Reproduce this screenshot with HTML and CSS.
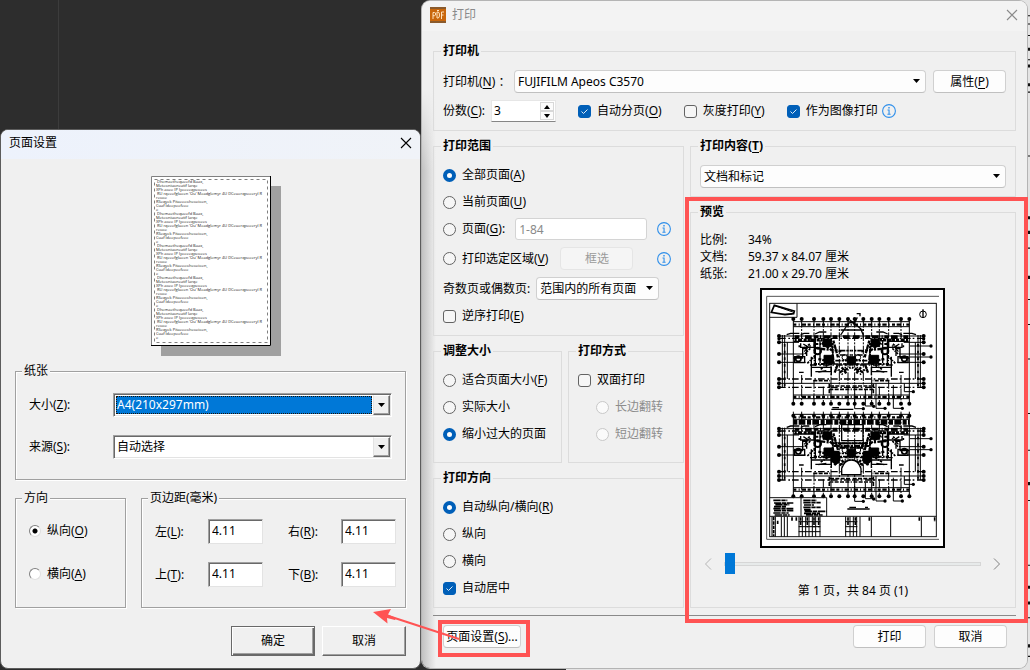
FILE: index.html
```html
<!DOCTYPE html>
<html lang="zh-CN">
<head>
<meta charset="utf-8">
<title>打印</title>
<link rel="stylesheet" href="styles.css">
</head>
<body>
<svg class="defs" aria-hidden="true">
  <defs>
    <symbol id="info" viewBox="0 0 14 14">
      <circle cx="7" cy="7" r="6.4" fill="none" stroke="#2f8fea" stroke-width="1.1"/>
      <path d="M6.3 3h1.4v1.4H6.3zM5.5 5.6h2.1v4.2h1v.9H5.4v-.9h1.1V6.5h-1z" fill="#2f8fea"/>
    </symbol>
    <symbol id="cross" viewBox="0 0 12 12">
      <path d="M1 1l10 10M11 1L1 11" fill="none" stroke="currentColor" stroke-width="1.1"/>
    </symbol>
    <symbol id="down" viewBox="0 0 7 4"><path d="M0 0h7L3.5 4z" fill="currentColor"/></symbol>
  </defs>
</svg>
<main class="desktop">
  <svg class="desktop-art" viewBox="0 0 3 640" preserveAspectRatio="none" aria-hidden="true">
    <path d="M0 15h3M0 23h3M0 34h3M0 57h3M0 88h3M0 149h3M0 237h3M0 286h3M0 310h3M0 343h3M0 395h3M0 430h3M0 478h3M0 540h3M0 590h3M0 627h3" stroke="#111"/>
    <path d="M0 47h3M0 63h3M0 81h3M0 208h3M0 222h3M0 265h3M0 462h3M0 561h3M0 576h3M0 617h3" stroke="#111" stroke-width="3"/>
  </svg>

  <section class="window setup" aria-label="页面设置">
    <header class="titlebar setup-title">
      <h1>页面设置</h1>
      <button class="close" aria-label="关闭"><svg width="12" height="12"><use href="#cross"/></svg></button>
    </header>
    <div class="setup-body">
      <svg class="paper" width="120" height="170" viewBox="0 0 120 170" aria-hidden="true">
        <defs>
          <g id="para">
            <text x="6" y="2">Dhemaethequeefd Baax,</text>
            <text x="5" y="6">Meteoniuoneatif larqe</text>
            <text x="5" y="10">XPh aoee IP lyeeeeqpeoees</text>
            <text x="6" y="14">RU rqeeefglueen 'Ou' Meadglemyr 4U DCeuerqpeeeryl R</text>
            <text x="5" y="18">reooe</text>
            <text x="5" y="22">RSeqyek Pitaeeeoheoeioen,</text>
            <text x="5" y="26">Cuaf ldeepeefeee</text>
            <text x="5" y="30">e</text>
          </g>
        </defs>
        <rect width="120" height="170" fill="#fff"/>
        <path d="M.5 170V.5H120" fill="none" stroke="#808080"/>
        <path d="M119.5 0v169.5H0" fill="none" stroke="#000"/>
        <rect x="3.5" y="3.5" width="113" height="163" fill="none" stroke="#808080" stroke-dasharray="3 3"/>
        <use href="#para" y="5"/><use href="#para" y="37"/><use href="#para" y="69"/><use href="#para" y="101"/><use href="#para" y="133"/>
      </svg>

      <fieldset class="old-group">
        <legend>纸张</legend>
        <div class="paper-fields">
          <label for="size">大小(<u>Z</u>):</label>
          <div class="old-select focused">
            <select id="size"><option>A4(210x297mm)</option></select>
            <span class="old-drop"><svg width="7" height="4"><use href="#down"/></svg></span>
          </div>
          <label for="source">来源(<u>S</u>):</label>
          <div class="old-select">
            <select id="source"><option>自动选择</option></select>
            <span class="old-drop"><svg width="7" height="4"><use href="#down"/></svg></span>
          </div>
        </div>
      </fieldset>

      <div class="setup-row">
        <fieldset class="old-group">
          <legend>方向</legend>
          <div class="old-radios">
            <label><input type="radio" name="orient" checked><span>纵向(<u>O</u>)</span></label>
            <label><input type="radio" name="orient"><span>横向(<u>A</u>)</span></label>
          </div>
        </fieldset>
        <fieldset class="old-group">
          <legend>页边距(毫米)</legend>
          <div class="margins">
            <label for="ml">左(<u>L</u>):</label><input id="ml" type="text" value="4.11">
            <label for="mr">右(<u>R</u>):</label><input id="mr" type="text" value="4.11">
            <label for="mt">上(<u>T</u>):</label><input id="mt" type="text" value="4.11">
            <label for="mb">下(<u>B</u>):</label><input id="mb" type="text" value="4.11">
          </div>
        </fieldset>
      </div>

      <div class="setup-actions">
        <button class="old-button default">确定</button>
        <button class="old-button">取消</button>
      </div>
    </div>
  </section>

  <section class="window print" aria-label="打印">
    <header class="titlebar print-title">
      <svg width="16" height="16" viewBox="0 0 16 16" aria-hidden="true">
        <rect width="16" height="16" rx="2" fill="#c9670c"/>
        <path d="M0 1h16M0 15h16" stroke="#8a5a2c" stroke-width="2"/>
        <path d="M3 12V5.500h1.500q1.200 0 1.200 1.500T4.500 8.700H3M7 5v6h1q1.500 0 1.500-3T8 5zM11.500 12V5H14M11.500 8H13.500M7 4l1-1 1 1" fill="none" stroke="#ffe3bd" stroke-width="1"/>
      </svg>
      <h1>打印</h1>
      <button class="close" aria-label="关闭"><svg width="12" height="12"><use href="#cross"/></svg></button>
    </header>

    <div class="print-body">
      <fieldset class="group">
        <legend>打印机</legend>
        <div class="line printer-line">
          <label for="printer">打印机(<u>N</u>) ：</label>
          <div class="select grow">
            <select id="printer"><option>FUJIFILM Apeos C3570</option></select>
            <svg width="7" height="4"><use href="#down"/></svg>
          </div>
          <button class="button">属性(<u>P</u>)</button>
        </div>
        <div class="line options-line">
          <div class="copies">
            <label for="copies">份数(<u>C</u>):</label>
            <div class="spin">
              <input id="copies" type="number" value="3">
              <div class="spin-buttons">
                <button aria-label="增加"><svg width="6" height="4" viewBox="0 0 6 4"><path d="M0 4h6L3 0z"/></svg></button>
                <button aria-label="减少"><svg width="6" height="4" viewBox="0 0 6 4"><path d="M0 0h6L3 4z"/></svg></button>
              </div>
            </div>
          </div>
          <label class="choice"><input type="checkbox" checked>自动分页(<u>O</u>)</label>
          <label class="choice"><input type="checkbox">灰度打印(<u>Y</u>)</label>
          <label class="choice"><input type="checkbox" checked>作为图像打印<svg width="14" height="14"><use href="#info"/></svg></label>
        </div>
      </fieldset>

      <div class="columns">
        <div class="stack">
          <fieldset class="group range">
            <legend>打印范围</legend>
            <div class="choices">
              <label class="choice"><input type="radio" name="range" checked>全部页面(<u>A</u>)</label>
              <label class="choice"><input type="radio" name="range">当前页面(<u>U</u>)</label>
              <div class="line">
                <label class="choice"><input type="radio" name="range">页面(<u>G</u>):</label>
                <input class="pages" type="text" placeholder="1-84" aria-label="页面">
                <svg class="end" width="14" height="14"><use href="#info"/></svg>
              </div>
              <div class="line spaced">
                <label class="choice"><input type="radio" name="range">打印选定区域(<u>V</u>)</label>
                <button class="button pick" disabled>框选</button>
                <svg class="end" width="14" height="14"><use href="#info"/></svg>
              </div>
              <div class="line parity spaced">
                <label for="parity">奇数页或偶数页:</label>
                <div class="select">
                  <select id="parity"><option>范围内的所有页面</option></select>
                  <svg width="7" height="4"><use href="#down"/></svg>
                </div>
              </div>
              <label class="choice"><input type="checkbox">逆序打印(<u>E</u>)</label>
            </div>
          </fieldset>

          <div class="pair">
            <fieldset class="group">
              <legend>调整大小</legend>
              <div class="choices">
                <label class="choice"><input type="radio" name="fit">适合页面大小(<u>F</u>)</label>
                <label class="choice"><input type="radio" name="fit">实际大小</label>
                <label class="choice"><input type="radio" name="fit" checked>缩小过大的页面</label>
              </div>
            </fieldset>
            <fieldset class="group">
              <legend>打印方式</legend>
              <div class="choices">
                <label class="choice"><input type="checkbox">双面打印</label>
                <label class="choice sub"><input type="radio" name="flip" disabled>长边翻转</label>
                <label class="choice sub"><input type="radio" name="flip" disabled>短边翻转</label>
              </div>
            </fieldset>
          </div>

          <fieldset class="group">
            <legend>打印方向</legend>
            <div class="choices">
              <label class="choice"><input type="radio" name="dir" checked>自动纵向/横向(<u>R</u>)</label>
              <label class="choice"><input type="radio" name="dir">纵向</label>
              <label class="choice"><input type="radio" name="dir">横向</label>
              <label class="choice"><input type="checkbox" checked>自动居中</label>
            </div>
          </fieldset>
        </div>

        <div class="stack">
          <fieldset class="group">
            <legend>打印内容(<u>T</u>)</legend>
            <div class="line content-line">
              <div class="select grow">
                <select aria-label="打印内容"><option>文档和标记</option></select>
                <svg width="7" height="4"><use href="#down"/></svg>
              </div>
            </div>
          </fieldset>

          <div class="preview-wrap">
            <fieldset class="group preview">
              <legend>预览</legend>
              <dl class="facts">
                <dt>比例:</dt><dd>34%</dd>
                <dt>文档:</dt><dd>59.37 x 84.07 厘米</dd>
                <dt>纸张:</dt><dd>21.00 x 29.70 厘米</dd>
              </dl>
              <svg class="plan" width="185" height="260" viewBox="30 24 555 780" role="img" aria-label="图纸预览">
                <defs>
                  <g id="pins"><circle cx="130" r="6"/><circle cx="155" r="6"/><circle cx="192" r="6"/><circle cx="220" r="6"/><circle cx="243" r="6"/><circle cx="268" r="6"/><circle cx="294" r="6"/></g>
                  <g id="side"><circle cy="168" r="6"/><circle cy="176" r="5"/><circle cy="187" r="6"/><circle cy="222" r="6"/><circle cy="247" r="6"/><circle cy="297" r="6"/><circle cy="310" r="6"/><circle cy="322" r="6"/></g>
                  <g id="half" fill="none" stroke="#000" stroke-width="3">
                    <path d="M87 168h217M87 187h60M87 222h74M87 247h80M87 310h217"/>
                    <path d="M87 175h217M87 297h217M87 322h217M180 255h124" stroke-dasharray="20 8 5 6" stroke-width="4"/>
                    <path d="M97 165v157M104 165v157M112 187v110M130 117v254"/>
                    <path d="M155 117v54M192 117v50M220 117v58M243 117v53M268 117v200M294 117v250M243 250v121M220 320v50M192 300v70M155 285v86" stroke-dasharray="26 4 6 4"/>
                    <path d="M130 345h174M130 356h174M130 125h174M130 140h174"/>
                    <path d="M130 351h174M130 134h174" stroke-width="7" stroke-dasharray="9 7 3 6 13 5"/>
                    <path d="M134 170h165" stroke-width="9" stroke-dasharray="14 5 3 9 20 6"/>
                    <path d="M134 180h112" stroke-width="9" stroke-dasharray="6 4 12 5 9 3"/>
                    <path d="M132 184h60v18h-40v-12M130 234h28v-28h12v22M134 230v18h30v-18zM196 170v88M210 180v70M184 230v60M184 262h60v24M196 275h50" stroke-width="4"/>
                    <circle cx="145" cy="236" r="8" stroke-width="5"/><circle cx="203" cy="213" r="10" stroke-width="6"/><circle cx="284" cy="232" r="8" stroke-width="3"/>
                    <path d="M219 178h26v22h-26zM222 226h28v25h-28zM292 230h12v23h-12z" fill="#000"/>
                    <path d="M200 205l36 4M216 188l30 24M205 237l40 9M250 182l14 50M262 256l-8 22M275 262l14 18M270 276l32-14M254 210l20 4" stroke-width="7" stroke-dasharray="9 3 14 4"/>
                    <path d="M194 192h54v60h-54z" stroke-width="6" stroke-dasharray="11 4 5 3"/>
                    <path d="M250 252h54M246 196l6 54M270 212h34M270 225h34M256 242h48" stroke-width="5" stroke-dasharray="16 3 7 3"/>
                    <path d="M160 206l22-16M164 222l18-18M172 250l22-22M212 268l30-18M256 262l22 22M286 250v30" stroke-width="5" stroke-dasharray="7 3 4 3"/>
                    <path d="M190 302h50M240 318h60M238 328h66M238 312v30" stroke-width="5" stroke-dasharray="12 4"/>
                    <path d="M147 277h14M205 276l24-4M163 215l12-15M160 192l16 10" stroke-width="4"/>
                    <path d="M110 164l12-4h26M152 164l10-4h16M195 162l14-6h20" stroke-width="4"/>
                    <path d="M104 192v126M148 176v26M180 176v24" stroke-width="5" stroke-dasharray="8 12"/>
                  </g>
                  <g id="building">
                    <use href="#half"/><use href="#half" transform="translate(608) scale(-1 1)"/>
                    <use href="#pins" y="371"/><use href="#pins" y="371" transform="translate(608) scale(-1 1)"/>
                    <use href="#side" x="87"/><use href="#side" x="521"/>
                    <path d="M480 198h62M480 231h62M378 310v75h26M430 315v70h25M463 310v25h25M346 330v48h25M314 340v46h26" fill="none" stroke="#000" stroke-width="3"/>
                    <circle cx="543" cy="198" r="5"/><circle cx="543" cy="231" r="5"/><circle cx="405" cy="385" r="5"/><circle cx="457" cy="385" r="5"/><circle cx="490" cy="335" r="5"/><circle cx="371" cy="379" r="5"/><circle cx="340" cy="386" r="5"/>
                  </g>
                </defs>
                <rect x="33" y="27" width="549" height="774" fill="#fff" stroke="#000" stroke-width="6"/>
                <path d="M567 49H50v729h517" fill="none" stroke="#555" stroke-width="3"/>
                <rect x="59" y="70" width="500" height="700" fill="none" stroke="#111" stroke-width="3"/>
                <path d="M59 112h82V70" fill="none" stroke="#111" stroke-width="3"/>
                <path d="M64 97l9-21 60 17-2 8-26 3z" fill="none" stroke="#000" stroke-width="5"/>
                <path d="M74 77l57 20-5 5-28 1" fill="none" stroke="#000" stroke-width="3"/>
                <circle cx="519" cy="103" r="10" fill="none" stroke="#000" stroke-width="3"/><path d="M519 88v25" stroke="#000" stroke-width="4"/>
                <use href="#building"/>
                <use href="#pins" y="117"/><use href="#pins" y="117" transform="translate(608) scale(-1 1)"/>
                <path d="M272 165l24-36 12-3 24 20 8 20M272 150h70M300 120l12 12 10-20M320 101h10v8" fill="none" stroke="#000" stroke-width="4"/>
                <use href="#building" y="278"/>
                <use href="#pins" y="407"/><use href="#pins" y="407" transform="translate(608) scale(-1 1)"/>
                <path d="M130 427h348" stroke="#000" stroke-width="14" stroke-dasharray="12 4 20 5"/>
                <path d="M275 434h64v48h-64z" fill="none" stroke="#000" stroke-width="4"/>
                <path d="M240 512h28l4 30-14 14-16-12zM368 512h-28l-4 30 14 14 16-12z"/>
                <path d="M275 584v-18q8-26 29-26t29 26v18z" fill="#fff" stroke="#000" stroke-width="4"/>
                <path d="M243 490h122M250 498h108M268 503h72" stroke="#000" stroke-width="6" stroke-dasharray="18 3 7 3"/>
                <path d="M244 388h66M247 383h20M292 687h67M298 682h20M345 682h9" stroke="#000" stroke-width="4"/>
                <path d="M59 653h171v56M153 653v56M59 709h500" fill="none" stroke="#111" stroke-width="3"/>
                <path d="M70 661h42M72 669h58M76 674h42M72 680h36M70 686h60M72 692h58M70 699h46M74 705h45M160 661h40M160 668h52M162 675h30M160 682h52M162 689h20M164 694h66M162 700h48M168 705h50" stroke="#000" stroke-width="5" stroke-dasharray="22 2 13 2"/>
                <path d="M66 710v60M76 710v60M94 710v60M103 710v60M112 710v60M147 710v60M157 710v60M167 710v60M177 710v60M187 710v60M197 710v60M210 710v60M287 710v60M300 710v60M310 710v60M320 710v60M330 710v60M364 710v60M422 710v60M514 710v60M146 725h65M146 740h65M146 755h65M286 725h36M286 740h36M286 755h36" stroke="#000" stroke-width="3"/>
                <path d="M71 711v58M152 712v28M172 712v30M192 712v30M206 712v30M294 712v25M316 712v25M83 722v12M126 712v12M139 712v12M358 712v12M508 712v12M554 712v14" stroke="#000" stroke-width="5" stroke-dasharray="10 3"/>
              </svg>
              <div class="pager">
                <button aria-label="上一页" class="prev"><svg width="8" height="12" viewBox="0 0 8 12"><path d="M7 .5L1.500 6 7 11.500"/></svg></button>
                <input type="range" min="1" max="84" value="1" aria-label="页码">
                <button aria-label="下一页"><svg width="8" height="12" viewBox="0 0 8 12"><path d="M1 .5L6.500 6 1 11.500"/></svg></button>
              </div>
              <p class="page-count">第 1 页，共 84 页 (1)</p>
            </fieldset>
            <div class="mark mark-preview"></div>
          </div>
        </div>
      </div>

      <footer class="footer">
        <div class="setup-link">
          <button class="button">页面设置(<u>S</u>)...</button>
          <div class="mark mark-setup"></div>
          <svg class="arrow" width="88" height="36" viewBox="0 0 88 36" aria-hidden="true">
            <path d="M86 32L14 8.500" stroke="#ff5353" stroke-width="2"/>
            <path d="M0 5l18-3-3 5.500 8 3.500-1 2-8-2 .500 5.500z" fill="#ff5353"/>
          </svg>
        </div>
        <button class="button">打印</button>
        <button class="button">取消</button>
      </footer>
    </div>
  </section>
</main>
</body>
</html>
```

FILE: styles.css
```css
* { box-sizing: border-box; }

body {
  margin: 0;
  font: 12px/16px "Noto Sans", "Noto Sans CJK SC", sans-serif;
  color: #000;
}

button, input, select { font: inherit; color: inherit; margin: 0; }
svg { display: block; flex: none; }
u { text-underline-offset: 2px; }
.defs { position: absolute; width: 0; height: 0; }

/* Desktop */
.desktop {
  position: relative;
  min-height: 100vh;
  display: grid;
  grid-template-columns: 421fr 605fr;
  column-gap: 1px;
  padding: 1px 3px 1px 0;
  align-items: start;
  background:
    linear-gradient(#3c3c3c, #3c3c3c) 58px 0 / 1px 100% no-repeat,
    linear-gradient(to right, #2d2d2d 55%, #e4e4e4 55%);
}
.desktop-art { position: absolute; top: 0; right: 0; width: 3px; height: 100%; }

.window {
  position: relative;
  min-width: 0;
  border-radius: 8px;
  background-color: #f0f0f0;
}
.titlebar { display: flex; align-items: center; }
.titlebar h1 { margin: 0; font-size: 12px; font-weight: 400; }
.close { margin-left: auto; padding: 0; border: 0; background: none; }

/* Page setup window */
.setup { align-self: end; border: 1px solid #5c5c5c; }
.setup-title {
  height: 29px;
  padding: 0 8px 4px;
  border-radius: 7px 7px 0 0;
  background: linear-gradient(to right, #edf2fc, #f0f3f8);
}
.setup-body { display: flex; flex-direction: column; padding: 17px 14px 12px; }
.paper { align-self: center; box-shadow: 10px 10px 0 #a0a0a0; margin-bottom: 17px; }
.paper text { font: 4px "Open Sans", sans-serif; fill: #222; }

.old-group {
  min-width: 0;
  margin: 0;
  padding: 0 13px;
  border: 1px solid #a0a0a0;
  box-shadow: 1px 1px 0 #fff, inset 1px 1px 0 #fff;
}
.old-group legend { margin-left: -7px; padding: 0 2px; background: #f0f0f0; }
.paper-fields {
  display: grid;
  grid-template-columns: 84px 1fr;
  row-gap: 18px;
  align-items: center;
  padding: 14px 0 20px;
}
.old-select {
  display: flex;
  height: 24px;
  border: 1px solid;
  border-color: #a0a0a0 #fff #fff #a0a0a0;
  box-shadow: inset 1px 1px 0 #696969, inset -1px -1px 0 #e3e3e3;
  background: #fff;
  padding: 1px;
}
.old-select select {
  flex: 1;
  min-width: 0;
  appearance: none;
  margin: 1px;
  border: 0;
  padding: 0 1px;
  background: #fff;
}
.old-select.focused select {
  background: #0078d7;
  color: #fff;
  outline: 1px dotted #1a1208;
  outline-offset: -1px;
}
.old-drop {
  display: flex;
  align-items: center;
  justify-content: center;
  width: 17px;
  border: 1px solid;
  border-color: #fff #696969 #696969 #e3e3e3;
  box-shadow: inset -1px -1px 0 #a0a0a0;
  background: #f0f0f0;
}
.setup-row {
  display: grid;
  grid-template-columns: 111fr 265fr;
  gap: 15px;
  margin-top: 10px;
}
.old-radios { display: grid; row-gap: 27px; padding: 17px 0 24px; }
.old-radios label { display: flex; align-items: center; gap: 6px; }
.old-radios input {
  appearance: none;
  width: 12px;
  height: 12px;
  border: 1px solid;
  border-color: #808080 #e0e0e0 #e0e0e0 #808080;
  border-radius: 50%;
  background: #fff;
}
.old-radios input:checked { background: radial-gradient(circle, #000 0 2px, #fff 3px); }
.margins {
  display: grid;
  grid-template-columns: 53px 80px 53px 55px;
  row-gap: 18px;
  align-items: center;
  padding: 13px 0 20px;
}
.margins input {
  width: 55px;
  height: 25px;
  padding: 0 3px 2px;
  border: 1px solid;
  border-color: #a0a0a0 #e3e3e3 #e3e3e3 #a0a0a0;
  box-shadow: inset 1px 1px 0 #696969;
  background: #fff;
}
.setup-actions { display: flex; justify-content: flex-end; gap: 7px; margin-top: 18px; }
.old-button {
  width: 84px;
  height: 30px;
  border: 1px solid;
  border-color: #fff #696969 #696969 #fff;
  box-shadow: inset -1px -1px 0 #a0a0a0;
  background: #f0f0f0;
}
.old-button.default {
  border-color: #696969;
  box-shadow: inset 1px 1px 0 #fff, inset -1px -1px 0 #696969, inset -2px -2px 0 #a0a0a0;
}

/* Print window */
.print {
  background:
    linear-gradient(#f0f0f0 90px, rgba(240, 240, 240, 0) 170px),
    linear-gradient(to right, #c2c2c2, #f0f0f0 14px);
  box-shadow: 0 0 0 1px #b4b4b4;
}
.print-title {
  height: 30px;
  padding: 0 9px 2px 8px;
  gap: 6px;
  border-radius: 8px 8px 0 0;
  background: #f3f3f3;
  color: #8a8a8a;
}
.print-body { padding: 12px 11px 20px; }

.group { min-width: 0; margin: 0; padding: 0 9px 8px; border: 1px solid #dcdcdc; }
.group legend { margin-left: -2px; padding: 0 2px; font-weight: 700; }
.line { display: flex; align-items: center; }
.printer-line { gap: 7px; padding-top: 11px; }
.printer-line label { width: 64px; white-space: nowrap; }
.options-line { gap: 22px; padding-top: 7px; }
.copies { display: flex; align-items: center; gap: 6px; }

.spin {
  display: flex;
  width: 65px;
  height: 22px;
  padding: 1px;
  border: 1px solid #e6e6e6;
  border-bottom-color: #868686;
  background: #fff;
}
.spin input {
  flex: 1;
  min-width: 0;
  padding: 0 1px;
  border: 0;
  background: none;
  appearance: textfield;
}
.spin input::-webkit-inner-spin-button { display: none; }
.spin-buttons { display: grid; width: 14px; }
.spin-buttons button {
  display: flex;
  align-items: center;
  justify-content: center;
  padding: 0;
  border: 1px solid #d8d8d8;
  background: #fcfcfc;
}

.select { position: relative; display: flex; height: 23px; }
.grow { flex: 1; }
.select select {
  flex: 1;
  min-width: 0;
  appearance: none;
  padding: 0 16px 0 3px;
  border: 1px solid #d0d0d0;
  border-bottom-color: #c0c0c0;
  border-radius: 4px;
  background: #fdfdfd;
}
.select svg { position: absolute; right: 6px; top: 9px; pointer-events: none; }

.button {
  min-width: 73px;
  height: 23px;
  padding: 0 2px;
  border: 1px solid #d0d0d0;
  border-bottom-color: #c0c0c0;
  border-radius: 4px;
  background: #fdfdfd;
}
.button:disabled { color: #9a9a9a; border-color: #e5e5e5; background: #f5f5f5; }

.choices { display: flex; flex-direction: column; gap: 5px; padding-top: 10px; }
.choice { display: flex; align-items: center; height: 22px; white-space: nowrap; }
.choice input {
  flex: none;
  appearance: none;
  width: 13px;
  height: 13px;
  margin-right: 6px;
  border: 1px solid #636363;
  background: #f6f6f6;
}
.choice input[type="radio"] { border-radius: 50%; }
.choice input[type="checkbox"] { border-radius: 3px; }
.choice input[type="radio"]:checked { border: 4px solid #005fb8; background: #fff; }
.choice input[type="checkbox"]:checked {
  border-color: #005fb8;
  background: #005fb8 url("data:image/svg+xml,%3Csvg xmlns='http://www.w3.org/2000/svg' viewBox='0 0 11 11'%3E%3Cpath d='M2.500 5.500l2 2 4-4' fill='none' stroke='%23dcebf8'/%3E%3C/svg%3E") center / 11px 11px;
}
.choice input:disabled { border-color: #c8c8c8; background: #fafafa; }
.choice:has(input:disabled) { color: #8c8c8c; }
.choice svg { margin-left: 4px; }
.sub { padding-left: 18px; }
.spaced { margin-top: 2px; }
.end { margin-left: auto; }

.columns { display: grid; grid-template-columns: 251fr 326fr; gap: 6px; margin-top: 7px; }
.stack { display: flex; flex-direction: column; gap: 7px; min-width: 0; }
.range { padding-right: 12px; }
.pages {
  width: 132px;
  height: 22px;
  margin-left: 10px;
  padding: 0 3px;
  border: 1px solid #d4d4d4;
  border-radius: 3px;
  background: #fff;
}
.pages::placeholder { color: #8a8a8a; }
.pick { margin-left: 12px; }
.parity { gap: 6px; }
.parity .select { width: 123px; }
.pair { display: grid; grid-template-columns: 129fr 116fr; gap: 6px; }
.pair .group { padding-bottom: 17px; }
.content-line { padding-top: 11px; }

.preview-wrap { position: relative; flex: 1; display: flex; }
.preview { flex: 1; }
.facts { display: grid; grid-template-columns: 48px 1fr; margin: 11px 0 6px; line-height: 17px; }
.facts dd { margin: 0; }
.plan { margin-left: 60px; }
.pager { display: flex; align-items: center; gap: 12px; height: 21px; margin: 5px 5px 8px 4px; }
.pager button { padding: 0; border: 0; background: none; }
.pager path { fill: none; stroke: #808080; }
.pager .prev path { stroke: #b4b4b4; }
.pager input { appearance: none; flex: 1; min-width: 0; height: 21px; background: none; }
.pager input::-webkit-slider-runnable-track {
  height: 4px;
  border: 1px solid #d6d6d6;
  background: #e7eaea;
}
.pager input::-webkit-slider-thumb {
  appearance: none;
  width: 10px;
  height: 21px;
  margin-top: -10px;
  background: #0078d7;
}
.page-count { margin: 0; line-height: 17px; text-align: center; }

.footer {
  display: flex;
  gap: 8px;
  margin-top: 7px;
  padding: 9px 9px 0 10px;
  border-top: 1px solid #8a8a8a;
}
.setup-link { position: relative; margin-right: auto; }
.setup-link .button { min-width: 78px; }

/* Highlights */
.mark { position: absolute; border: 4px solid #ff5353; pointer-events: none; }
.mark-preview { inset: -7px -12px -15px -5px; }
.mark-setup { inset: -5px -9px -9px -5px; }
.arrow { position: absolute; left: -70px; top: -18px; pointer-events: none; }
```
